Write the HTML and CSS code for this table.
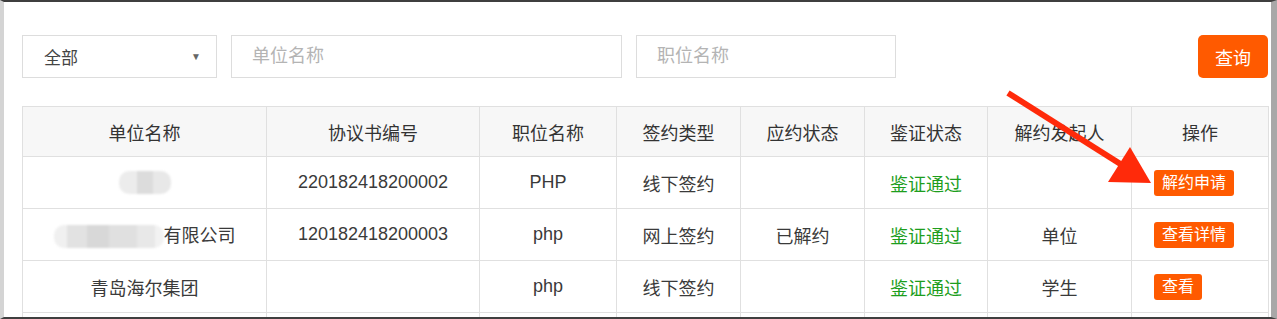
FILE: index.html
```html
<!DOCTYPE html>
<html lang="zh">
<head>
  <meta charset="UTF-8">
  <title>协议书列表</title>
  <link rel="stylesheet" href="styles.css">
</head>
<body>

  <div class="page">
    <div class="filters">
      <div class="select">
        <span>全部</span>
        <span class="caret">▼</span>
      </div>
      <input class="field field-unit" type="text" placeholder="单位名称">
      <input class="field field-job" type="text" placeholder="职位名称">
      <button class="btn-search">查询</button>
    </div>

    <table class="list">
      <colgroup>
        <col style="width:244px">
        <col style="width:213px">
        <col style="width:137px">
        <col style="width:124px">
        <col style="width:124px">
        <col style="width:123px">
        <col style="width:144px">
        <col style="width:137px">
      </colgroup>
      <thead>
        <tr>
          <th>单位名称</th>
          <th>协议书编号</th>
          <th>职位名称</th>
          <th>签约类型</th>
          <th>应约状态</th>
          <th>鉴证状态</th>
          <th>解约发起人</th>
          <th>操作</th>
        </tr>
      </thead>
      <tbody>
        <tr>
          <td><span class="masked masked-short"></span></td>
          <td>220182418200002</td>
          <td>PHP</td>
          <td>线下签约</td>
          <td></td>
          <td class="ok">鉴证通过</td>
          <td></td>
          <td class="ops"><span class="btn-op">解约申请</span></td>
        </tr>
        <tr>
          <td><span class="masked masked-long"></span>有限公司</td>
          <td>120182418200003</td>
          <td>php</td>
          <td>网上签约</td>
          <td>已解约</td>
          <td class="ok">鉴证通过</td>
          <td>单位</td>
          <td class="ops"><span class="btn-op">查看详情</span></td>
        </tr>
        <tr>
          <td>青岛海尔集团</td>
          <td></td>
          <td>php</td>
          <td>线下签约</td>
          <td></td>
          <td class="ok">鉴证通过</td>
          <td>学生</td>
          <td class="ops"><span class="btn-op">查看</span></td>
        </tr>
        <tr>
          <td></td><td></td><td></td><td></td><td></td><td></td><td></td><td></td>
        </tr>
      </tbody>
    </table>

    <!-- 提示箭头，指向解约申请 -->
    <svg class="arrow" width="1277" height="319" viewBox="0 0 1277 319">
      <line x1="1008" y1="93" x2="1122" y2="165" stroke="#ff2a0a" stroke-width="6"/>
      <polygon points="1151,183 1108,182 1130,147" fill="#ff2a0a"/>
    </svg>
  </div>

</body>
</html>
```

FILE: styles.css
```css
body {
  margin: 0;
  background: #fff;
}

.page {
  position: relative;
  box-sizing: border-box;
  height: 319px;
  overflow: hidden;
  border-top: 2px solid #3f3f3f;
  border-bottom: 2px solid #3f3f3f;
  border-left: 4px solid #d4d4d4;
  border-right: 6px solid #a8a8a8;
  padding: 33px 3px 0 18px;
  font-family: "Liberation Sans", "Noto Sans CJK SC", sans-serif;
  color: #333;
}

.filters {
  display: flex;
  gap: 14px;
  height: 43px;
}

.select {
  box-sizing: border-box;
  width: 195px;
  border: 1px solid #ddd;
  display: flex;
  align-items: center;
  justify-content: space-between;
  padding: 0 15px 0 21px;
  font-size: 17px;
  color: #444;
}

.caret {
  font-size: 10px;
  color: #666;
}

.field {
  box-sizing: border-box;
  border: 1px solid #ddd;
  padding: 0 20px;
  font-size: 18px;
  font-family: inherit;
  outline: none;
}

.field::placeholder {
  color: #b4b4b4;
}

.field-unit {
  width: 391px;
}

.field-job {
  width: 260px;
}

.btn-search {
  margin-left: auto;
  width: 70px;
  border: 0;
  border-radius: 5px;
  background-color: #ff5a00;
  color: #fff;
  font-size: 18px;
  font-family: inherit;
  cursor: pointer;
}

.list {
  margin-top: 28px;
  width: 1246px;
  table-layout: fixed;
  border-collapse: collapse;
  font-size: 18px;
}

.list th,
.list td {
  border: 1px solid #e0e0e0;
  text-align: center;
  padding: 0;
}

.list th {
  height: 49px;
  background-color: #f7f7f7;
  font-weight: normal;
  color: #333;
}

.list td {
  height: 51px;
  color: #3a3a3a;
}

.list td.ok {
  color: #1d9e1d;
}

.list td.ops {
  text-align: left;
  padding-left: 22px;
}

.btn-op {
  display: inline-block;
  padding: 3px 8px;
  line-height: 20px;
  border-radius: 3px;
  background-color: #ff5a00;
  color: #fff;
  font-size: 16px;
}

/* 打码区域 */
.masked {
  display: inline-block;
  vertical-align: middle;
  height: 23px;
  border-radius: 10px;
  filter: blur(1px);
}

.masked-short {
  width: 52px;
  background: linear-gradient(90deg, #ececec 0 35%, #dcdcdc 35% 65%, #e8e8e8 65%);
}

.masked-long {
  width: 110px;
  background: linear-gradient(90deg, #f0f0f0 0 12%, #e2e2e2 12% 30%, #d8d8d8 30% 50%, #e0e0e0 50% 75%, #e8e8e8 75% 92%, #f2f2f2 92%);
}

.arrow {
  position: absolute;
  left: -4px;
  top: -2px;
  pointer-events: none;
}
```
